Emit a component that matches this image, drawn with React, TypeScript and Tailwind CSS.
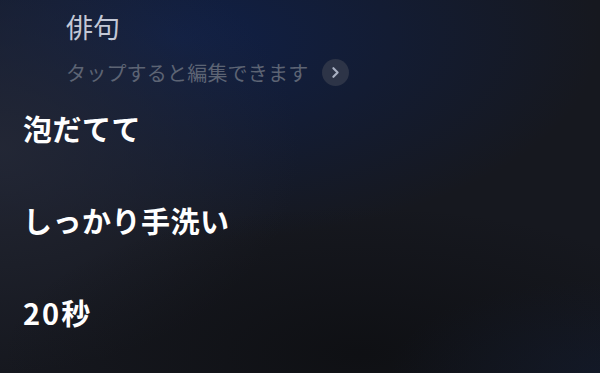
import { ChevronRight } from 'lucide-react';

const jp = { fontFamily: '"Noto Sans CJK JP", "Noto Sans", sans-serif' };

export default function App() {
  return (
    <div
      className="relative h-[373px] w-[600px] overflow-hidden bg-[#16181f]"
      style={jp}
    >
      {/* soft backdrop glow */}
      <div className="absolute inset-0 bg-[radial-gradient(ellipse_70%_55%_at_30%_10%,#102047_0%,rgba(16,32,71,0)_100%)]" />
      <div className="absolute inset-0 bg-[radial-gradient(ellipse_50%_60%_at_0%_40%,rgba(36,40,54,0.9)_0%,rgba(36,40,54,0)_100%)]" />
      <div className="absolute inset-0 bg-[radial-gradient(ellipse_60%_40%_at_60%_95%,rgba(13,14,17,0.8)_0%,rgba(13,14,17,0)_100%)]" />
      <div className="absolute inset-0 bg-[radial-gradient(ellipse_35%_25%_at_100%_100%,rgba(18,28,50,0.5)_0%,rgba(18,28,50,0)_100%)]" />

      <div className="relative flex flex-col">
        <div className="pl-[66px] pt-[13px]">
          <p className="text-[27px] leading-none text-[#c3c8d6]">俳句</p>
          <div className="mt-[19px] flex items-center gap-[14px]">
            <span className="text-[20px] leading-none tracking-[0.2px] text-[#5d6474]">
              タップすると編集できます
            </span>
            <span className="flex h-[27px] w-[27px] items-center justify-center rounded-full bg-[#2d3447]">
              <ChevronRight className="h-[17px] w-[17px] text-[#a9b0c2]" strokeWidth={3} />
            </span>
          </div>
        </div>

        <div className="mt-[28px] flex flex-col gap-[63px] pl-[23px] text-[29px] font-bold leading-none text-white">
          <p className="tracking-[0.5px]">泡だてて</p>
          <p className="tracking-[0.5px]">しっかり手洗い</p>
          <p>
            <span className="tracking-[2px]">20</span>秒
          </p>
        </div>
      </div>
    </div>
  );
}
